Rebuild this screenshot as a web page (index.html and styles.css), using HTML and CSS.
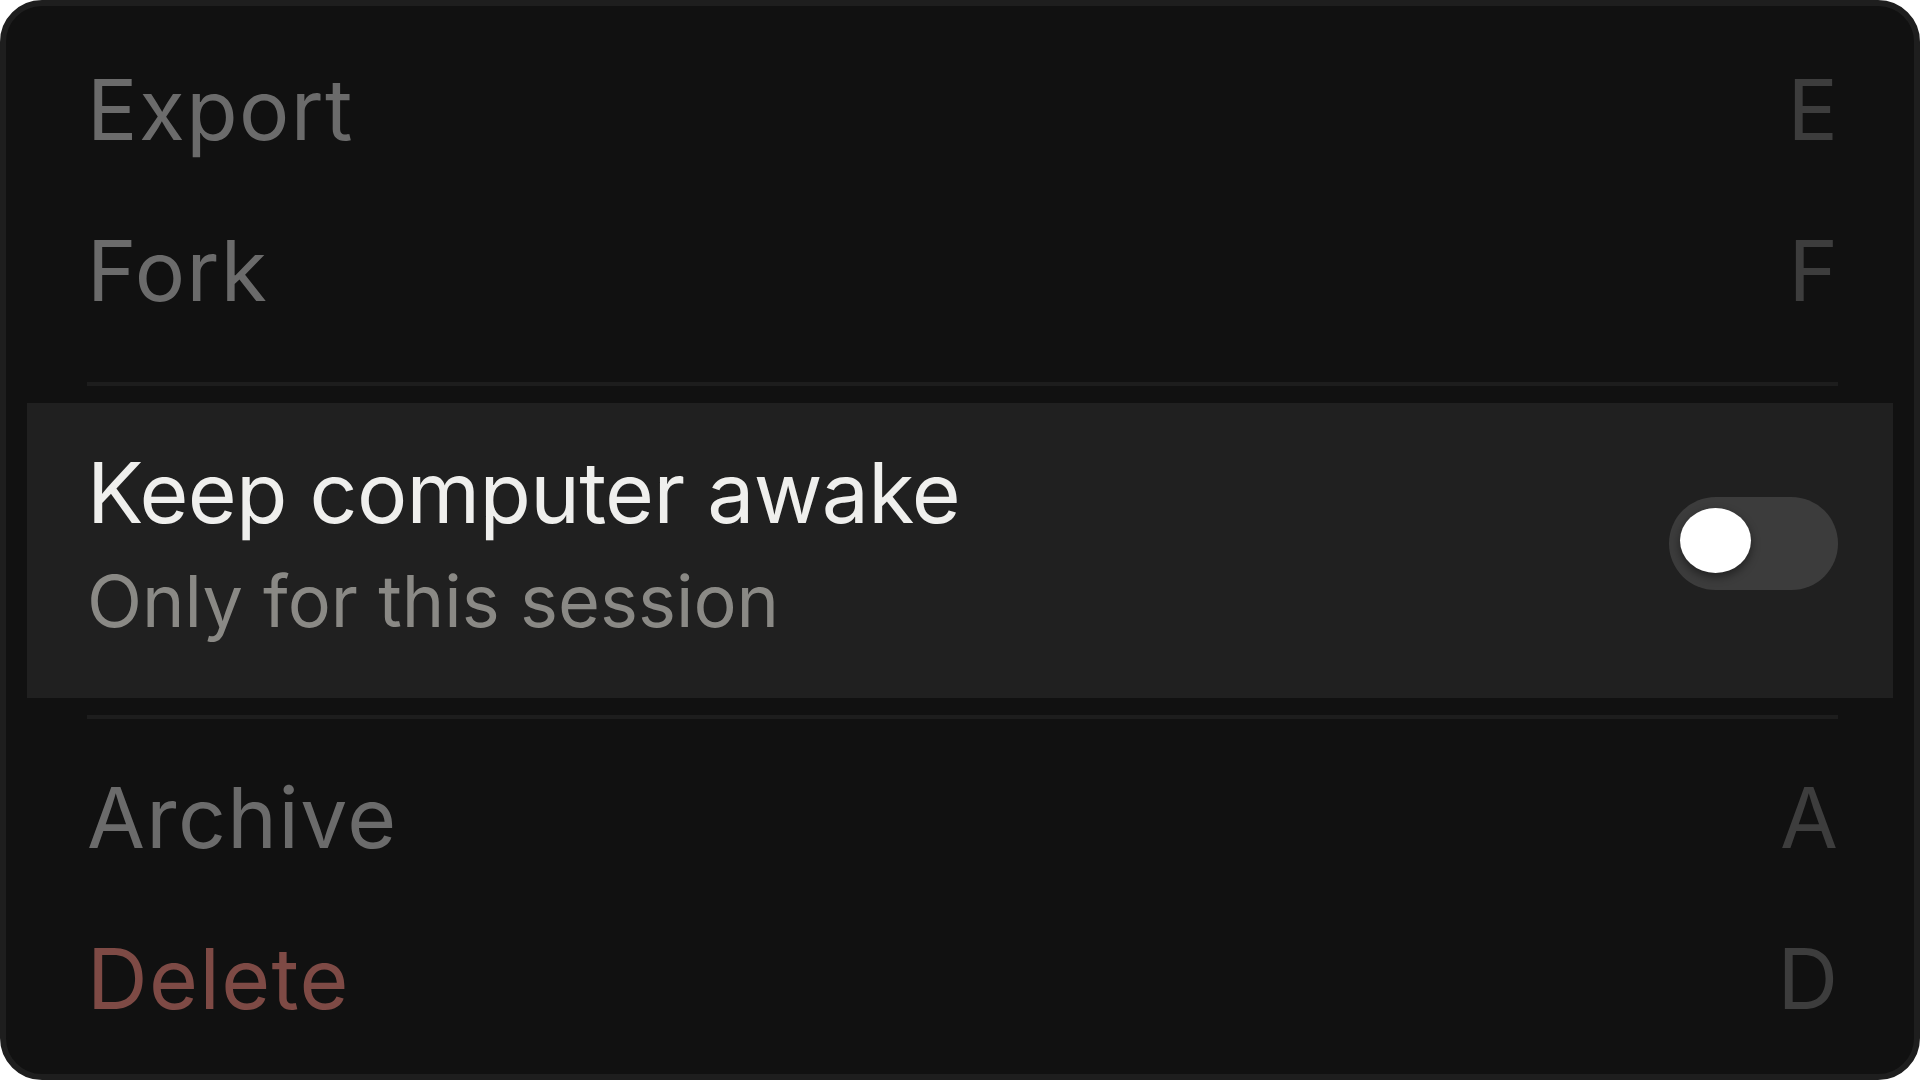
FILE: index.html
```html
<!DOCTYPE html>
<html lang="en">
<head>
<meta charset="utf-8">
<title>Session menu</title>
<link rel="stylesheet" href="styles.css">
</head>
<body>
<div class="menu">
  <div class="item">
    <span class="label">Export</span>
    <span class="key">E</span>
  </div>
  <div class="item">
    <span class="label">Fork</span>
    <span class="key">F</span>
  </div>
  <div class="sep sep-top"></div>
  <div class="item-toggle">
    <div class="toggle-text">
      <div class="toggle-title">Keep computer awake</div>
      <div class="toggle-sub">Only for this session</div>
    </div>
    <div class="switch"><div class="knob"></div></div>
  </div>
  <div class="sep sep-bottom"></div>
  <div class="item">
    <span class="label">Archive</span>
    <span class="key">A</span>
  </div>
  <div class="item">
    <span class="label danger">Delete</span>
    <span class="key">D</span>
  </div>
</div>
</body>
</html>
```
FILE: styles.css
```css
html, body {
  margin: 0;
  padding: 0;
  background: #ffffff;
}

body {
  font-family: Inter, "Noto Sans", "Liberation Sans", sans-serif;
}

.menu {
  box-sizing: border-box;
  width: 1920px;
  height: 1080px;
  background: #111111;
  border: 6px solid #1e1e1e;
  border-radius: 42px;
  padding: 24px 21px 14px 21px;
  display: flex;
  flex-direction: column;
}

.item {
  height: 161px;
  padding: 0 55px 0 60px;
  display: flex;
  align-items: center;
  justify-content: space-between;
  font-size: 84px;
  line-height: 100.8px;
}

.label {
  color: #6b6b6b;
  letter-spacing: 1.4px;
}

.label.danger {
  color: #7e4a45;
}

.key {
  color: #3d3d3d;
}

.sep {
  height: 4px;
  background: #1d1d1d;
  margin-left: 60px;
  margin-right: 55px;
}

.sep-top {
  margin-top: 30px;
  margin-bottom: 17px;
}

.sep-bottom {
  margin-top: 17px;
  margin-bottom: 19px;
}

.item-toggle {
  box-sizing: border-box;
  height: 295px;
  background: #202020;
  padding: 40px 55px 54px 60px;
  display: flex;
  align-items: center;
  justify-content: space-between;
}

.toggle-title {
  color: #efefed;
  font-size: 84px;
  line-height: 100.8px;
  letter-spacing: -0.7px;
}

.toggle-sub {
  color: #8a8985;
  font-size: 72px;
  line-height: 86.4px;
  margin-top: 14px;
}

.switch {
  position: relative;
  width: 169px;
  height: 93px;
  border-radius: 47px;
  background: #3c3c3c;
}

.knob {
  position: absolute;
  left: 11px;
  top: 11px;
  width: 71px;
  height: 65px;
  border-radius: 50%;
  background: #ffffff;
  box-shadow: 0 4px 10px rgba(0, 0, 0, 0.45);
}
```
